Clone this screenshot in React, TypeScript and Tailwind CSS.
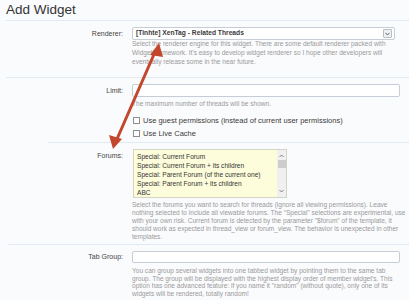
import React from "react";

const Sep = ({ ml = "ml-[6px]" }: { ml?: string }) => (
  <div className={`${ml} h-px bg-[#e1e9f2]`} />
);

const Help = ({ lines, lh }: { lines: string[]; lh: string }) => (
  <div className={`text-[6.55px] text-[#9a9a9a] ${lh}`}>
    {lines.map((l, i) => (
      <div key={i} className="whitespace-nowrap">
        {l}
      </div>
    ))}
  </div>
);

export default function App() {
  return (
    <div className="relative w-[409px] h-[300px] overflow-hidden bg-[#fafbfd] font-['Liberation_Sans',Arial,sans-serif]">
      <div className="h-[20px] pl-[6px] text-[13.5px] leading-[20px] text-[#333]">
        Add Widget
      </div>
      <Sep />

      {/* Renderer */}
      <div className="grid grid-cols-[123px_1fr] gap-x-[9px] pt-[6px] pb-[11px]">
        <div className="text-right text-[7px] leading-[13px] text-[#444]">Renderer:</div>
        <div>
          <div className="w-[263px] h-[13px] rounded-[2px] border border-[#c6cdd6] bg-white flex items-center justify-between pl-[3px] pr-[2px]">
            <span className="text-[6.7px] font-bold text-[#3a3a3a] whitespace-nowrap">
              [Tinhte] XenTag - Related Threads
            </span>
            <span className="w-[9px] h-[9px] border border-[#b9bec5] rounded-[1px] bg-[#eef0f3] flex items-center justify-center">
              <svg width="5" height="4" viewBox="0 0 5 4">
                <path d="M0.5 0.8 L2.5 3 L4.5 0.8" stroke="#555" strokeWidth="0.9" fill="none" />
              </svg>
            </span>
          </div>
          <div className="-mt-[1px]">
            <Help
              lh="leading-[9px]"
              lines={[
                "Select the renderer engine for this widget. There are some default renderer packed with",
                "WidgetFramework. It's easy to develop widget renderer so I hope other developers will",
                "eventually release some in the near future.",
              ]}
            />
          </div>
        </div>
      </div>
      <Sep />

      {/* Limit */}
      <div className="grid grid-cols-[123px_1fr] gap-x-[9px] pt-[6px] pb-[2px]">
        <div className="text-right text-[7px] leading-[13px] text-[#444]">Limit:</div>
        <div>
          <div className="w-[268px] h-[13px] rounded-[2px] border border-[#c6cdd6] bg-white" />
          <div className="mt-[2px]">
            <Help lh="leading-[9px]" lines={["The maximum number of threads will be shown."]} />
          </div>
          <div className="mt-[6px] text-[7.5px] leading-[13px] text-[#3a3a3a]">
            <div className="flex items-center gap-[3px] pl-[1px]">
              <span className="w-[7px] h-[7px] border border-[#8f8f8f] bg-white" />
              <span>Use guest permissions (instead of current user permissions)</span>
            </div>
            <div className="flex items-center gap-[3px] pl-[1px]">
              <span className="w-[7px] h-[7px] border border-[#8f8f8f] bg-white" />
              <span>Use Live Cache</span>
            </div>
          </div>
        </div>
      </div>
      <Sep ml="ml-[48px]" />

      {/* Forums */}
      <div className="grid grid-cols-[123px_1fr] gap-x-[9px] pt-[6px] pb-[3px]">
        <div className="text-right text-[7px] leading-[13px] text-[#444]">Forums:</div>
        <div>
          <div className="ml-[1px] w-[154px] h-[49px] border border-[#d4d4c4] bg-[#fdfddc] flex">
            <div className="flex-1 pt-[2px] pl-[3px] text-[6.6px] leading-[9px] text-[#333]">
              <div>Special: Current Forum</div>
              <div>Special: Current Forum + its children</div>
              <div>Special: Parent Forum (of the current one)</div>
              <div>Special: Parent Forum + its children</div>
              <div>ABC</div>
            </div>
            <div className="w-[9px] bg-[#f0f0f0] flex flex-col items-center">
              <svg width="5" height="4" viewBox="0 0 5 4" className="mt-[4px]">
                <path d="M0.5 3 L2.5 1 L4.5 3" stroke="#777" strokeWidth="0.9" fill="none" />
              </svg>
              <div className="mt-[2px] w-[8px] h-[8px] bg-[#cdcdcd]" />
              <div className="flex-1" />
              <svg width="5" height="4" viewBox="0 0 5 4" className="mb-[4px]">
                <path d="M0.5 1 L2.5 3 L4.5 1" stroke="#777" strokeWidth="0.9" fill="none" />
              </svg>
            </div>
          </div>
          <div className="mt-[3px]">
            <Help
              lh="leading-[8px]"
              lines={[
                "Select the forums you want to search for threads (ignore all viewing permissions). Leave",
                "nothing selected to include all viewable forums. The \"Special\" selections are experimental, use",
                "with your own risk. Current forum is detected by the parameter \"$forum\" of the template, it",
                "should work as expected in thread_view or forum_view. The behavior is unexpected in other",
                "templates.",
              ]}
            />
          </div>
        </div>
      </div>
      <Sep ml="ml-[8px]" />

      {/* Tab Group */}
      <div className="grid grid-cols-[123px_1fr] gap-x-[9px] pt-[6px]">
        <div className="text-right text-[7px] leading-[12px] text-[#444]">Tab Group:</div>
        <div>
          <div className="w-[268px] h-[12px] rounded-[2px] border border-[#c6cdd6] bg-white" />
          <div className="mt-[4px]">
            <Help
              lh="leading-[7.5px]"
              lines={[
                "You can group several widgets into one tabbed widget by pointing them to the same tab",
                "group. The group will be displayed with the highest display order of member widget's. This",
                "option has one advanced feature: if you name it \"random\" (without quote), only one of its",
                "widgets will be rendered, totally random!",
              ]}
            />
          </div>
        </div>
      </div>

      {/* Red double arrow annotation */}
      <svg
        className="absolute left-0 top-0 pointer-events-none"
        width="409"
        height="300"
        viewBox="0 0 409 300"
      >
        <line x1="155" y1="52" x2="117" y2="139" stroke="#c2472c" strokeWidth="3" strokeLinecap="round" />
        <polygon points="159,43 150,55 163,57" fill="#c2472c" />
        <polygon points="113,149 109,135 122,139" fill="#c2472c" />
      </svg>
    </div>
  );
}
